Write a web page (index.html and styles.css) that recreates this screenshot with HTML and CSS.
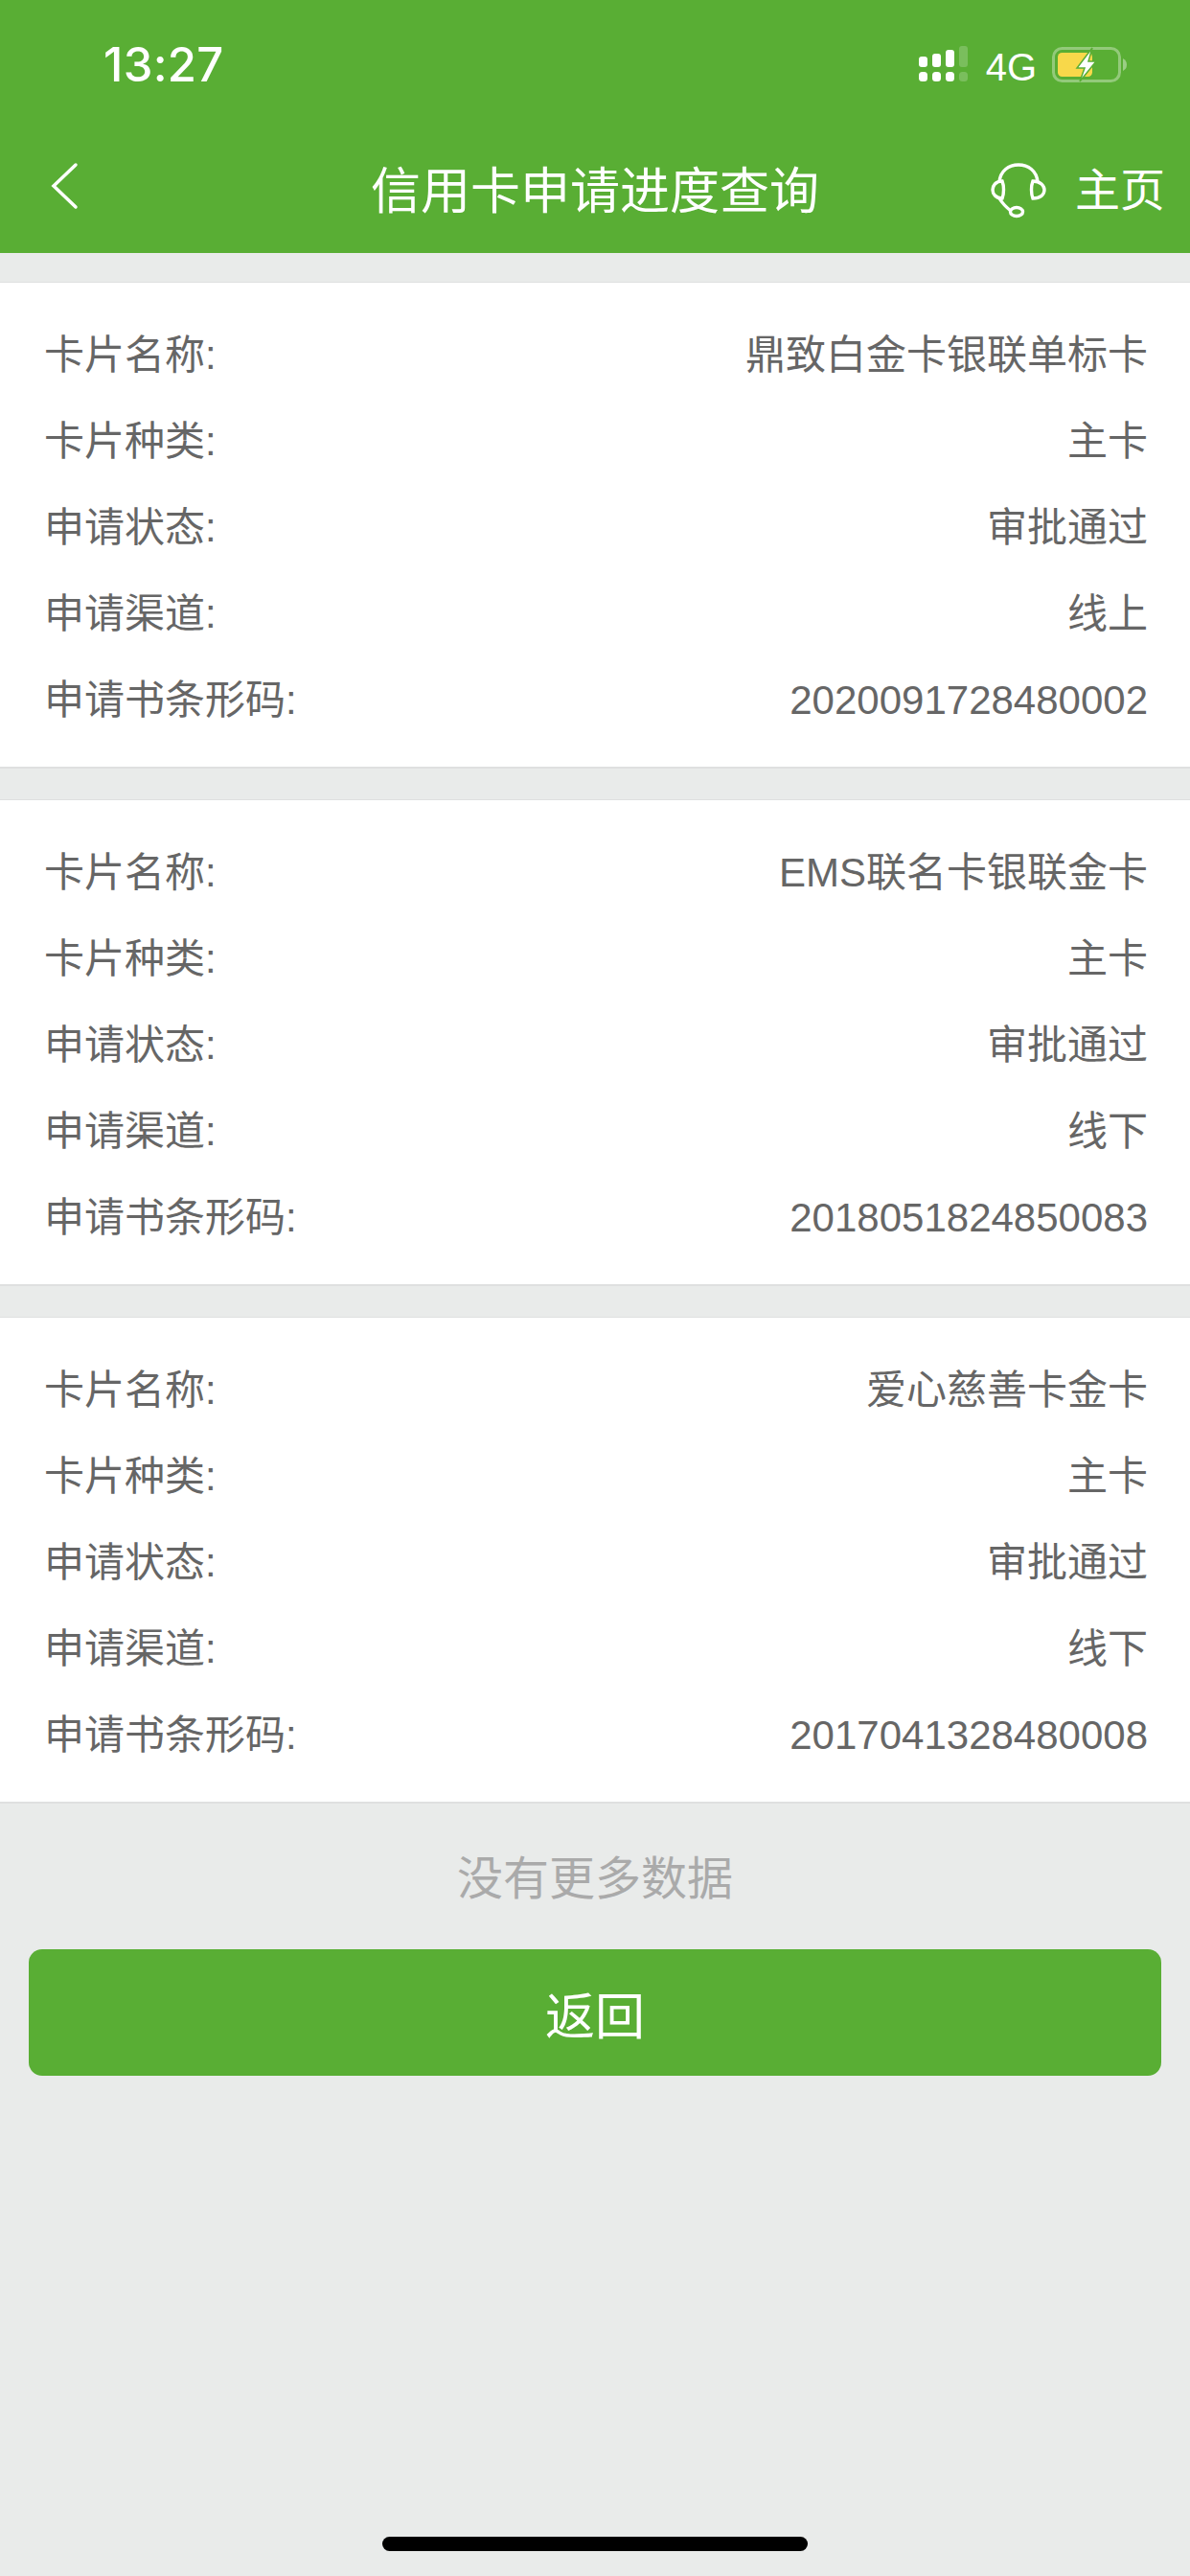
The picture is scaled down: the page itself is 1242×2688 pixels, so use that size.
FILE: index.html
```html
<!DOCTYPE html>
<html lang="zh-CN">
<head>
<meta charset="UTF-8">
<meta name="viewport" content="width=device-width, initial-scale=1.0">
<title>信用卡申请进度查询</title>
<link rel="stylesheet" href="styles.css">
</head>
<body>

<header class="top">
  <div class="status">
    <span class="time">13:27</span>
    <div class="status-right">
      <svg class="signal" width="52" height="38" viewBox="0 0 52 38">
        <g fill="#fff">
          <rect x="0" y="11" width="9" height="11" rx="3"/>
          <rect x="14" y="8" width="9" height="14" rx="3"/>
          <rect x="28" y="4" width="9" height="18" rx="3"/>
          <rect x="0" y="27" width="9" height="10" rx="3.5"/>
          <rect x="14" y="27" width="9" height="10" rx="3.5"/>
          <rect x="28" y="27" width="9" height="10" rx="3.5"/>
        </g>
        <g fill="#fff" opacity="0.2">
          <rect x="42" y="0" width="9" height="22" rx="3"/>
          <rect x="42" y="27" width="9" height="10" rx="3.5"/>
        </g>
      </svg>
      <span class="net">4G</span>
      <svg class="battery" width="80" height="38" viewBox="0 0 80 38">
        <rect x="1.5" y="1.5" width="69" height="34" rx="9" fill="none" stroke="#fff" stroke-opacity="0.35" stroke-width="3"/>
        <path d="M74 12 q4 2 4 6.500 t-4 6.500z" fill="#fff" fill-opacity="0.4"/>
        <rect x="6" y="6" width="36" height="25" rx="4.500" fill="#f8d84a"/>
        <path d="M42 1 L26 22 H34 L29 36 L46 15 H38 Z" fill="#fff" stroke="#59ae34" stroke-width="1.500"/>
      </svg>
    </div>
  </div>
  <nav class="nav">
    <svg class="back" width="30" height="50" viewBox="0 0 30 50">
      <path d="M27 3 L4 25 L27 47" fill="none" stroke="#fff" stroke-width="3.500" stroke-linecap="round"/>
    </svg>
    <h1 class="title">信用卡申请进度查询</h1>
    <div class="nav-right">
      <svg class="service" width="58" height="58" viewBox="0 0 58 58">
        <g fill="none" stroke="#fff" stroke-width="3.400">
          <path d="M9 20 C10 8 19 2 29 2 C39 2 48 8 49 20"/>
          <path d="M12 19 C5 19 2 24 2 28 C2 32 5 37 12 37 C14 32 14 24 12 19 Z"/>
          <path d="M44 19 C52 19 56 24 56 28 C56 33 52 37 44 37 C42 32 42 24 44 19 Z"/>
          <path d="M9 37 C12 42 16 46 21 50"/>
          <ellipse cx="27" cy="51" rx="6.500" ry="4.500"/>
        </g>
      </svg>
      <span class="home">主页</span>
    </div>
  </nav>
</header>

<main class="list">
  <section class="card">
    <div class="row"><span>卡片名称:</span><span>鼎致白金卡银联单标卡</span></div>
    <div class="row"><span>卡片种类:</span><span>主卡</span></div>
    <div class="row"><span>申请状态:</span><span>审批通过</span></div>
    <div class="row"><span>申请渠道:</span><span>线上</span></div>
    <div class="row"><span>申请书条形码:</span><span>2020091728480002</span></div>
  </section>
  <section class="card">
    <div class="row"><span>卡片名称:</span><span>EMS联名卡银联金卡</span></div>
    <div class="row"><span>卡片种类:</span><span>主卡</span></div>
    <div class="row"><span>申请状态:</span><span>审批通过</span></div>
    <div class="row"><span>申请渠道:</span><span>线下</span></div>
    <div class="row"><span>申请书条形码:</span><span>2018051824850083</span></div>
  </section>
  <section class="card">
    <div class="row"><span>卡片名称:</span><span>爱心慈善卡金卡</span></div>
    <div class="row"><span>卡片种类:</span><span>主卡</span></div>
    <div class="row"><span>申请状态:</span><span>审批通过</span></div>
    <div class="row"><span>申请渠道:</span><span>线下</span></div>
    <div class="row"><span>申请书条形码:</span><span>2017041328480008</span></div>
  </section>
</main>

<p class="no-more">没有更多数据</p>
<button class="back-btn" type="button">返回</button>

<div class="home-bar"></div>

</body>
</html>
```

FILE: styles.css
```css
* {
  box-sizing: border-box;
}
html, body {
  margin: 0;
  padding: 0;
}
body {
  width: 1242px;
  height: 2688px;
  overflow: hidden;
  position: relative;
  background-color: #e9ebea;
  font-family: "Liberation Sans", "Noto Sans CJK SC", sans-serif;
}
.top {
  height: 264px;
  background-color: #59ae34;
  color: #fff;
}
.status {
  height: 132px;
  display: flex;
  justify-content: space-between;
  padding: 44px 64px 0 108px;
}
.time {
  font-family: Inter, "Liberation Sans", sans-serif;
  font-size: 49px;
  font-weight: 500;
  line-height: 48px;
  letter-spacing: 0.3px;
}
.status-right {
  display: flex;
  align-items: flex-start;
}
.signal {
  margin-top: 4px;
}
.net {
  font-size: 40px;
  line-height: 46px;
  margin: 0 16px 0 18px;
  padding-top: 3px;
}
.battery {
  margin-top: 5px;
}
.nav {
  height: 132px;
  position: relative;
  display: flex;
  align-items: center;
  justify-content: center;
}
.back {
  position: absolute;
  left: 52px;
  top: 37px;
}
.title {
  margin: 0;
  font-size: 52px;
  font-weight: 400;
  line-height: 64px;
  padding-top: 3px;
}
.nav-right {
  position: absolute;
  right: 26px;
  top: 37px;
  display: flex;
  align-items: center;
}
.service {
  margin-right: 30px;
}
.home {
  font-size: 47px;
  line-height: 60px;
}
.list {
  padding-top: 30px;
  display: flex;
  flex-direction: column;
  gap: 32px;
}
.card {
  height: 508px;
  padding: 31px 44px 0 46px;
  background-color: #fff;
  border-top: 1px solid #dfe0e0;
  border-bottom: 2px solid #dfe0e0;
}
.row {
  height: 90px;
  display: flex;
  justify-content: space-between;
  align-items: baseline;
  font-size: 42px;
  line-height: 90px;
  color: #666;
}
.no-more {
  margin: 0;
  height: 152px;
  padding-top: 47px;
  text-align: center;
  font-size: 48px;
  line-height: 64px;
  color: #aaa;
}
.back-btn {
  display: block;
  width: 1182px;
  height: 132px;
  margin: 0 30px;
  border: none;
  border-radius: 14px;
  background-color: #59ae34;
  color: #fff;
  font-family: inherit;
  font-size: 52px;
}
.home-bar {
  position: absolute;
  left: 399px;
  top: 2647px;
  width: 444px;
  height: 15px;
  border-radius: 8px;
  background-color: #000;
}
```
